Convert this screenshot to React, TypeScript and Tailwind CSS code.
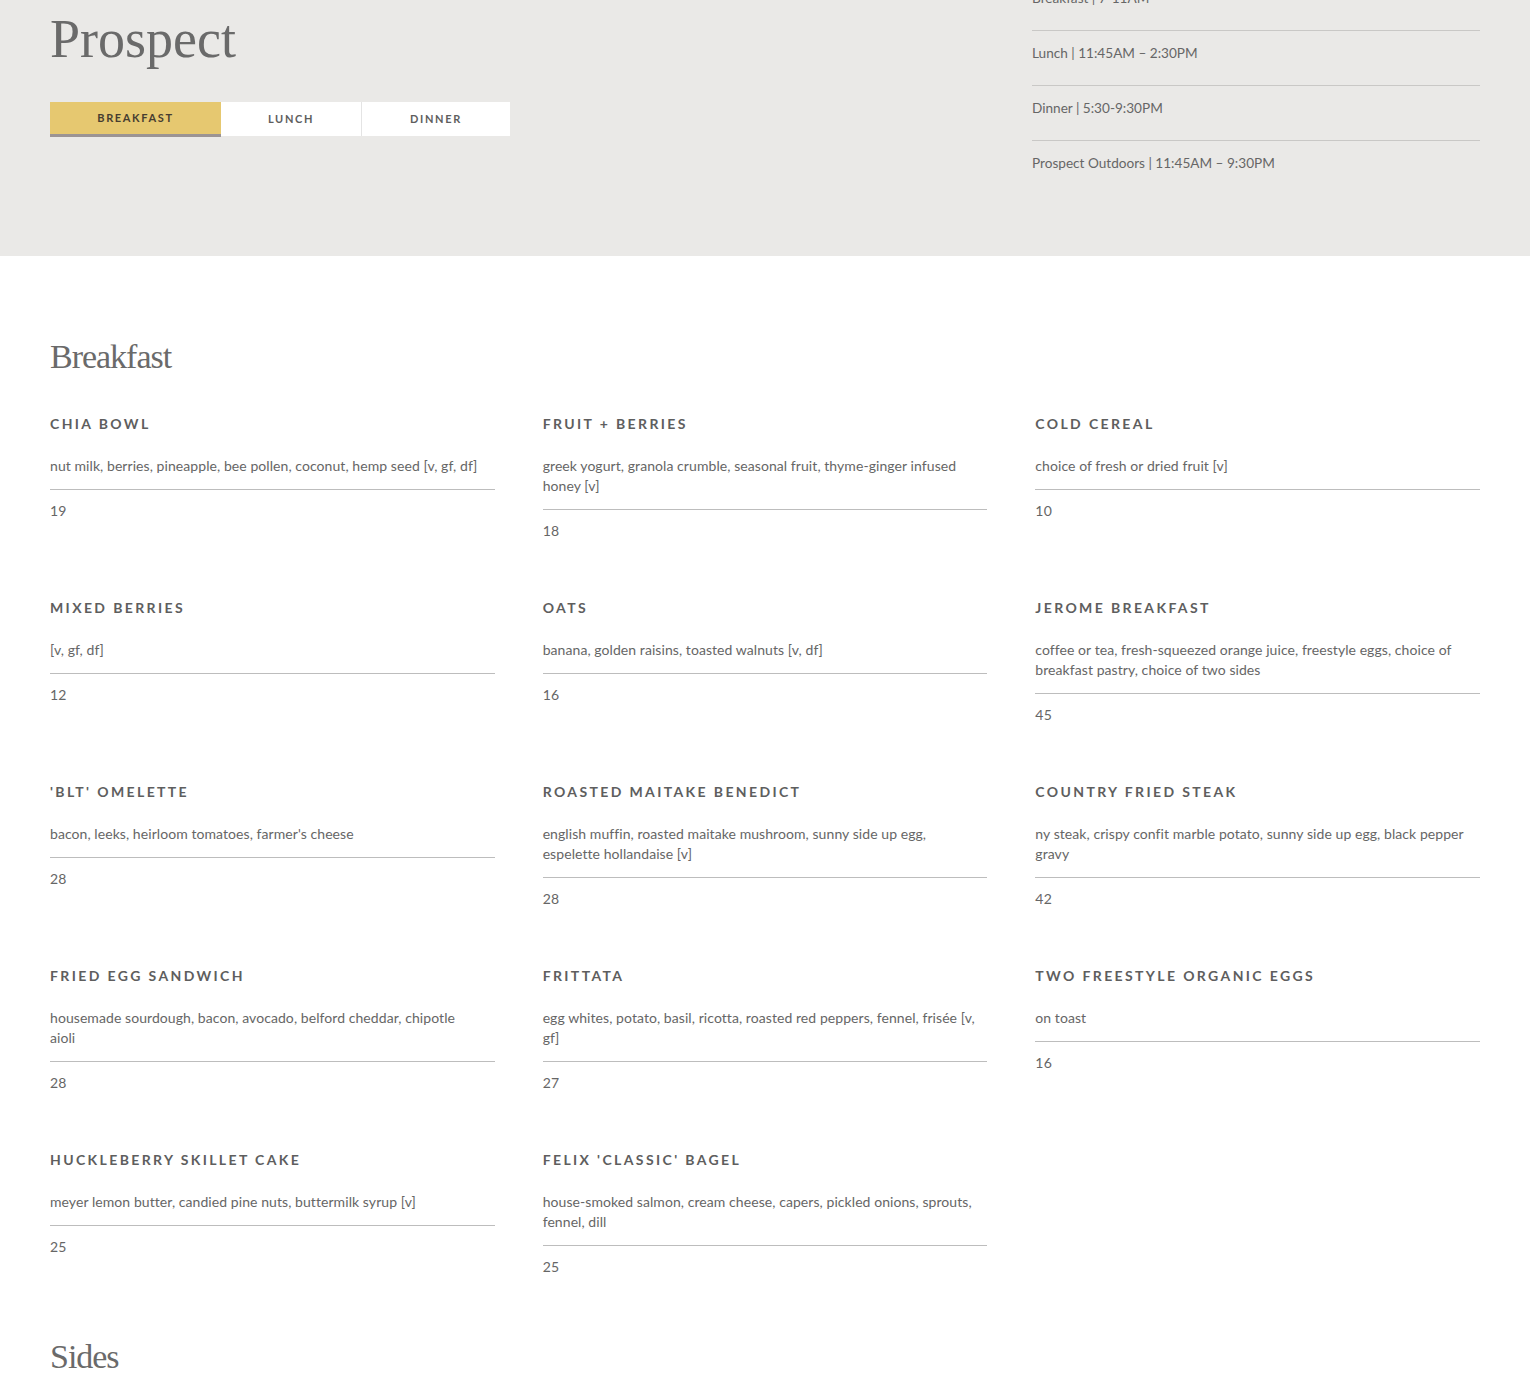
import React from 'react';

interface MenuItem {
  name: string;
  description: string;
  price: string;
}

const hours = [
  'Breakfast | 7-11AM',
  'Lunch | 11:45AM – 2:30PM',
  'Dinner | 5:30-9:30PM',
  'Prospect Outdoors | 11:45AM – 9:30PM',
];

const breakfast: MenuItem[] = [
  { name: 'Chia Bowl', description: 'nut milk, berries, pineapple, bee pollen, coconut, hemp seed [v, gf, df]', price: '19' },
  { name: 'Fruit + Berries', description: 'greek yogurt, granola crumble, seasonal fruit, thyme-ginger infused honey [v]', price: '18' },
  { name: 'Cold Cereal', description: 'choice of fresh or dried fruit [v]', price: '10' },
  { name: 'Mixed Berries', description: '[v, gf, df]', price: '12' },
  { name: 'Oats', description: 'banana, golden raisins, toasted walnuts [v, df]', price: '16' },
  { name: 'Jerome Breakfast', description: 'coffee or tea, fresh-squeezed orange juice, freestyle eggs, choice of breakfast pastry, choice of two sides', price: '45' },
  { name: "'BLT' Omelette", description: "bacon, leeks, heirloom tomatoes, farmer's cheese", price: '28' },
  { name: 'Roasted Maitake Benedict', description: 'english muffin, roasted maitake mushroom, sunny side up egg, espelette hollandaise [v]', price: '28' },
  { name: 'Country Fried Steak', description: 'ny steak, crispy confit marble potato, sunny side up egg, black pepper gravy', price: '42' },
  { name: 'Fried Egg Sandwich', description: 'housemade sourdough, bacon, avocado, belford cheddar, chipotle aioli', price: '28' },
  { name: 'Frittata', description: 'egg whites, potato, basil, ricotta, roasted red peppers, fennel, frisée [v, gf]', price: '27' },
  { name: 'Two Freestyle Organic Eggs', description: 'on toast', price: '16' },
  { name: 'Huckleberry Skillet Cake', description: 'meyer lemon butter, candied pine nuts, buttermilk syrup [v]', price: '25' },
  { name: "Felix 'Classic' Bagel", description: 'house-smoked salmon, cream cheese, capers, pickled onions, sprouts, fennel, dill', price: '25' },
];

const serif = { fontFamily: '"Liberation Serif", "DejaVu Serif", serif' };

const MenuCard: React.FC<{ item: MenuItem }> = ({ item }) => (
  <div>
    <h3 className="text-[14px] leading-[20px] font-bold uppercase tracking-[0.17em] text-[#5e5e5e]">
      {item.name}
    </h3>
    <div className="mt-[22px] pb-[13px] border-b border-[#bdbdbd]">
      <p className="pr-[12px] text-[14px] leading-[20px] tracking-[0.005em] text-[#666]">{item.description}</p>
    </div>
    <p className="mt-[11px] text-[14px] leading-[20px] tracking-[0.015em] text-[#666]">{item.price}</p>
  </div>
);

export default function App() {
  return (
    <div className="min-h-[1400px] bg-white" style={{ fontFamily: 'Lato, "Open Sans", sans-serif' }}>
      {/* Header */}
      <div className="h-[256px] overflow-hidden bg-[#eae9e7]">
        <div className="flex justify-between px-[50px]">
          <div className="pt-[7px]">
            <h1 className="text-[54px] leading-[65px] text-[#6a6a6a]" style={serif}>
              Prospect
            </h1>
            <div className="mt-[30px] flex">
              <button className="w-[171px] h-[35px] pt-[1px] bg-[#e6c870] border-b-[3px] border-[#9b9494] text-[11px] font-bold uppercase tracking-[0.15em] text-[#463d30]">
                Breakfast
              </button>
              <button className="w-[141px] h-[34px] bg-white border-r border-[#e4e4e4] text-[11px] font-bold uppercase tracking-[0.15em] text-[#5e5e5e]">
                Lunch
              </button>
              <button className="w-[148px] h-[34px] bg-white text-[11px] font-bold uppercase tracking-[0.15em] text-[#5e5e5e]">
                Dinner
              </button>
            </div>
          </div>
          <ul className="w-[448px] -mt-[24px]">
            {hours.map((h, i) => (
              <li
                key={h}
                className={`pt-[12px] pb-[22px] text-[13.6px] leading-[20px] text-[#666] ${
                  i < hours.length - 1 ? 'border-b border-[#c9c8c6]' : ''
                }`}
              >
                {h}
              </li>
            ))}
          </ul>
        </div>
      </div>

      {/* Menu */}
      <div className="px-[50px] pt-[80px]">
        <h2 className="text-[34px] leading-[41px] tracking-[-0.03em] text-[#6a6a6a]" style={serif}>
          Breakfast
        </h2>
        <div className="mt-[37px] grid grid-cols-3 gap-x-[48px] gap-y-[57px]">
          {breakfast.map((item) => (
            <MenuCard key={item.name} item={item} />
          ))}
        </div>
        <h2 className="mt-[59px] text-[34px] leading-[41px] tracking-[-0.03em] text-[#6a6a6a]" style={serif}>
          Sides
        </h2>
      </div>
    </div>
  );
}
